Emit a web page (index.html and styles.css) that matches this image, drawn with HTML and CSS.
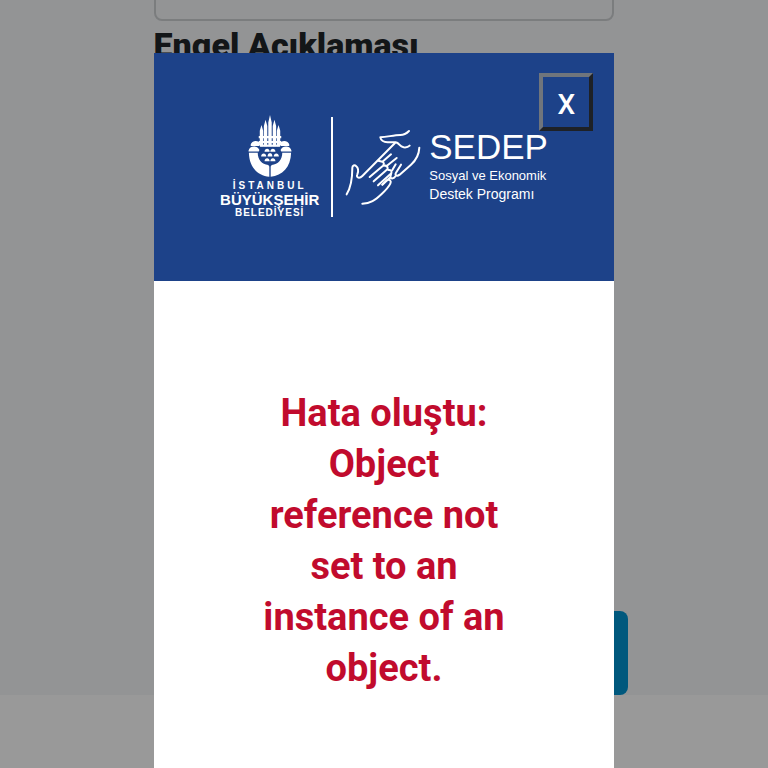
FILE: index.html
```html
<!DOCTYPE html>
<html lang="tr">

<head>
    <meta charset="UTF-8">
    <meta name="viewport" content="width=device-width, initial-scale=1.0">
    <title>SEDEP</title>
    <link rel="stylesheet" href="styles.css">
</head>

<body>
    <form class="form">
        <textarea class="field" id="engel-turu" aria-label="Engel Türü"></textarea>
        <label class="label" for="engel-aciklama">Engel Açıklaması</label>
        <textarea class="field field-big" id="engel-aciklama"></textarea>
        <button class="submit" type="button" aria-label="Gönder"></button>
    </form>

    <div class="overlay">
        <div class="modal" role="dialog" aria-modal="true">
            <div class="modal-header">
                <div class="ibb">
                    <svg class="emblem" viewBox="12 12 128 182" fill="#fff">
                        <g id="half">
                            <!-- minarets -->
                            <path d="M46 104V58l5-17 5 17v46zM58 104V44l5-18 5 18v60zM71 104V34l5-22v92z" />
                            <path d="M43 74h33v6H43zM43 88h33v6H43zM50 99h26v6H46z" />
                            <!-- domes -->
                            <path d="M19 100c3-15 25-16 29-2l-4 5H20zM13 117c2-15 26-17 32-2l-2 4H13z" />
                            <!-- tulip -->
                            <path d="M14 123h26c0 20 12 34 31 36l3 4v30C40 191 15 165 14 123z" />
                            <path d="M60 120c0-12 15-12 15 0zM50 134c0-12 15-12 15 0zM69 134c0-9 4-10 7-10v10zM60 148c0-12 15-12 15 0z" />
                        </g>
                        <use href="#half" transform="matrix(-1 0 0 1 152 0)" />
                    </svg>
                    <span class="ibb-top">İSTANBUL</span>
                    <span class="ibb-name">BÜYÜKŞEHİR</span>
                    <span class="ibb-bottom">BELEDİYESİ</span>
                </div>
                <div class="line"></div>
                <svg class="hands" viewBox="10 9 228 228" fill="none" stroke="#fff" stroke-width="6" stroke-linecap="round" stroke-linejoin="round">
                    <path d="M202 15c-8 8-14 12-26 12-20 0-38 6-60 7 2 10 10 14 22 15h24c12 2 10 12 24 15 8 1 14-1 18-5" />
                    <path d="M160 51L62 150c-8 8-20 6-15-5 4-10 2-20-4-25-4-4-11-2-11 5 0 30-2 55-17 80" />
                    <path d="M110 104l12 3q8 5 2 12L84 153" />
                    <path d="M124 106l24-21M127 119q12-2 11 10L96 166" />
                    <path d="M134 121l31-25M140 132q12-1 9 10l-40 36" />
                    <path d="M152 132l10-17M148 144l-2 10-24 22" />
                    <path d="M233 65c-1 22-10 38-25 51l-34 30c-8 6-16 2-11-6l15-24" />
                    <path d="M146 155c4 3 10 4 16-5M122 176l13-13c9-5 15 2 11 10-6 12-14 20-26 31-20 19-34 28-58 29" />
                </svg>
                <div class="sedep">
                    <span class="sedep-name">SEDEP</span>
                    <span class="sedep-first">Sosyal ve Ekonomik</span>
                    <span class="sedep-second">Destek Programı</span>
                </div>
                <button class="close" type="button">X</button>
            </div>
            <p class="message">Hata oluştu: Object reference not set to an instance of an object.</p>
        </div>
    </div>

    <script>
    document.querySelector(".close").addEventListener("click", () => {
        document.querySelector(".overlay").style.display = "none";
    });
    </script>
</body>

</html>
```

FILE: styles.css
```css
* {
    box-sizing: border-box;
}

body {
    background-color: #fff;
    height: 100vh;
    margin: 0;
    overflow: hidden;
    font-family: Roboto, sans-serif;
}

.form {
    display: flex;
    flex-direction: column;
    align-items: flex-start;
    padding: 0 20%;
    background-color: #f5f7f9;
}

.field {
    width: 100%;
    height: 60px;
    margin-top: -39px;
    border: 2px solid #ced0d3;
    border-radius: 8px;
    background-color: transparent;
    resize: none;
}

.label {
    margin-top: 4px;
    font-size: 34px;
    line-height: 40px;
    font-weight: 900;
    color: #212529;
}

.field-big {
    height: 500px;
    margin: 10px 0 36px;
}

.submit {
    width: calc(100% + 14px);
    height: 84px;
    border: none;
    border-radius: 8px;
    background-color: #0093d0;
}

.overlay {
    position: fixed;
    inset: 0;
    padding: 53px 20% 0;
    background-color: rgba(0, 0, 0, 0.4);
    overflow: hidden;
}

.modal {
    min-height: 100%;
    background-color: #fff;
}

.modal-header {
    position: relative;
    display: flex;
    justify-content: center;
    align-items: center;
    height: 228px;
    background-color: #1d4289;
    color: #fff;
    font-family: "Liberation Sans", Arial, sans-serif;
}

.ibb {
    display: flex;
    flex-direction: column;
    align-items: center;
}

.emblem {
    width: 44px;
    height: 62px;
    margin-bottom: 3px;
}

.ibb-top,
.ibb-bottom {
    font-size: 10px;
    line-height: 12px;
    font-weight: bold;
    letter-spacing: 1px;
}

.ibb-top {
    letter-spacing: 3px;
}

.ibb-name {
    font-size: 15px;
    line-height: 15px;
    font-weight: bold;
}

.line {
    width: 2px;
    height: 100px;
    margin: 0 12px;
    background-color: #fff;
}

.hands {
    width: 76px;
    height: 76px;
}

.sedep {
    display: flex;
    flex-direction: column;
    margin-left: 8px;
    padding-bottom: 4px;
}

.sedep-name {
    font-size: 35px;
    line-height: 40px;
}

.sedep-first {
    font-size: 13px;
    line-height: 18px;
}

.sedep-second {
    font-size: 14px;
    line-height: 18px;
}

.close {
    position: absolute;
    top: 20px;
    right: 21px;
    width: 54px;
    height: 58px;
    padding: 4px 0 0;
    border: 4px solid;
    border-color: #70757c #1e2126 #1e2126 #70757c;
    background-color: transparent;
    color: #fff;
    font-family: Roboto, sans-serif;
    font-size: 28px;
    font-weight: 500;
    cursor: pointer;
}

.message {
    margin: 0;
    padding: 107px 100px;
    color: #c10b2d;
    font-size: 38px;
    line-height: 51px;
    font-weight: 700;
    text-align: center;
}
```
